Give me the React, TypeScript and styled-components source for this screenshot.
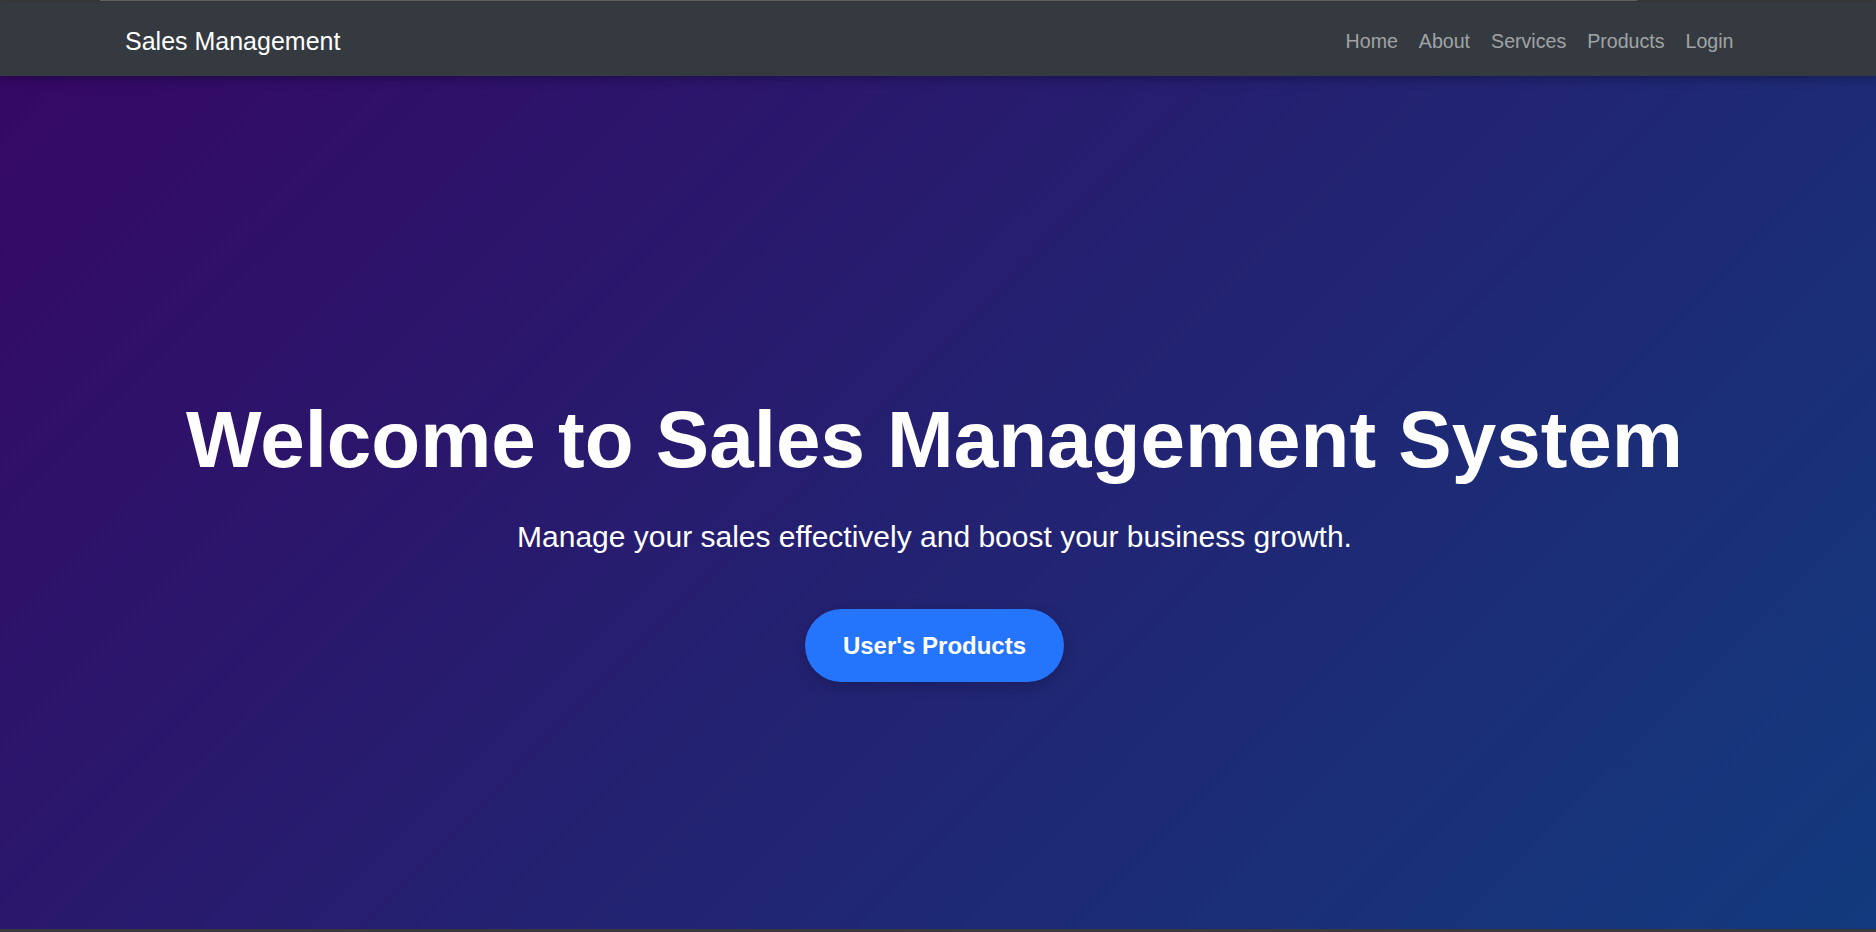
import * as React from "react";
import styled, { createGlobalStyle } from "styled-components";

const GlobalStyle = createGlobalStyle`
  html, body {
    margin: 0;
    padding: 0;
    height: 100%;
    overflow: hidden;
    background-color: #3a3a3a;
  }
  body {
    font-family: "Liberation Sans", Arial, sans-serif;
  }
  * {
    box-sizing: border-box;
  }
`;

const Page = styled.div`
  display: flex;
  flex-direction: column;
  height: 932px;
`;

const TopEdge = styled.div`
  height: 2px;
  background-color: #3c3c3c;
  padding-left: 100px;
`;

const TopEdgeLine = styled.div`
  width: 1537px;
  height: 1px;
  background-color: #6a6a6a;
`;

const Navbar = styled.nav`
  position: relative;
  z-index: 2;
  height: 74px;
  flex-shrink: 0;
  display: flex;
  align-items: center;
  justify-content: space-between;
  padding: 4px 132px 0 125px;
  background-color: #343a40;
  box-shadow: 0 2px 10px rgba(0, 0, 0, 0.35);
`;

const Brand = styled.a`
  color: #ffffff;
  font-size: 25px;
  text-decoration: none;
  line-height: 1;
`;

const NavList = styled.ul`
  display: flex;
  list-style: none;
  margin: 0;
  padding: 0;
`;

const NavLink = styled.a`
  display: block;
  padding: 8px 10.5px;
  color: rgba(255, 255, 255, 0.55);
  font-size: 19.6px;
  text-decoration: none;
`;

const Hero = styled.section`
  flex: 1;
  display: flex;
  flex-direction: column;
  align-items: center;
  padding: 316px 7px 0 0;
  background: linear-gradient(135deg, #6a11cb 0%, #2575fc 100%);
  box-shadow: inset 0 0 0 2000px rgba(0, 0, 0, 0.5);
  color: #ffffff;
  text-align: center;
`;

const Title = styled.h1`
  margin: 0;
  font-size: 80px;
  font-weight: 700;
  line-height: 1.2;
`;

const Subtitle = styled.p`
  margin: 26px 0 0;
  font-size: 30px;
  line-height: 1.5;
`;

const CtaButton = styled.button`
  margin-top: 50px;
  padding: 0 38px;
  height: 73px;
  border: none;
  border-radius: 40px;
  background-color: #2575fc;
  color: #ffffff;
  font-family: "Liberation Sans", Arial, sans-serif;
  font-size: 24px;
  font-weight: 700;
  cursor: pointer;
  box-shadow: 0 4px 15px rgba(0, 0, 0, 0.2);
`;

const BottomEdge = styled.div`
  height: 3px;
  flex-shrink: 0;
  background-color: #3a3a3a;
`;

const links = ["Home", "About", "Services", "Products", "Login"];

const App: React.FC = () => {
  return (
    <Page>
      <GlobalStyle />
      <TopEdge>
        <TopEdgeLine />
      </TopEdge>
      <Navbar>
        <Brand href="#">Sales Management</Brand>
        <NavList>
          {links.map(link => (
            <li key={link}>
              <NavLink href="#">{link}</NavLink>
            </li>
          ))}
        </NavList>
      </Navbar>
      <Hero>
        <Title>Welcome to Sales Management System</Title>
        <Subtitle>Manage your sales effectively and boost your business growth.</Subtitle>
        <CtaButton>User's Products</CtaButton>
      </Hero>
      <BottomEdge />
    </Page>
  );
};

export default App;
